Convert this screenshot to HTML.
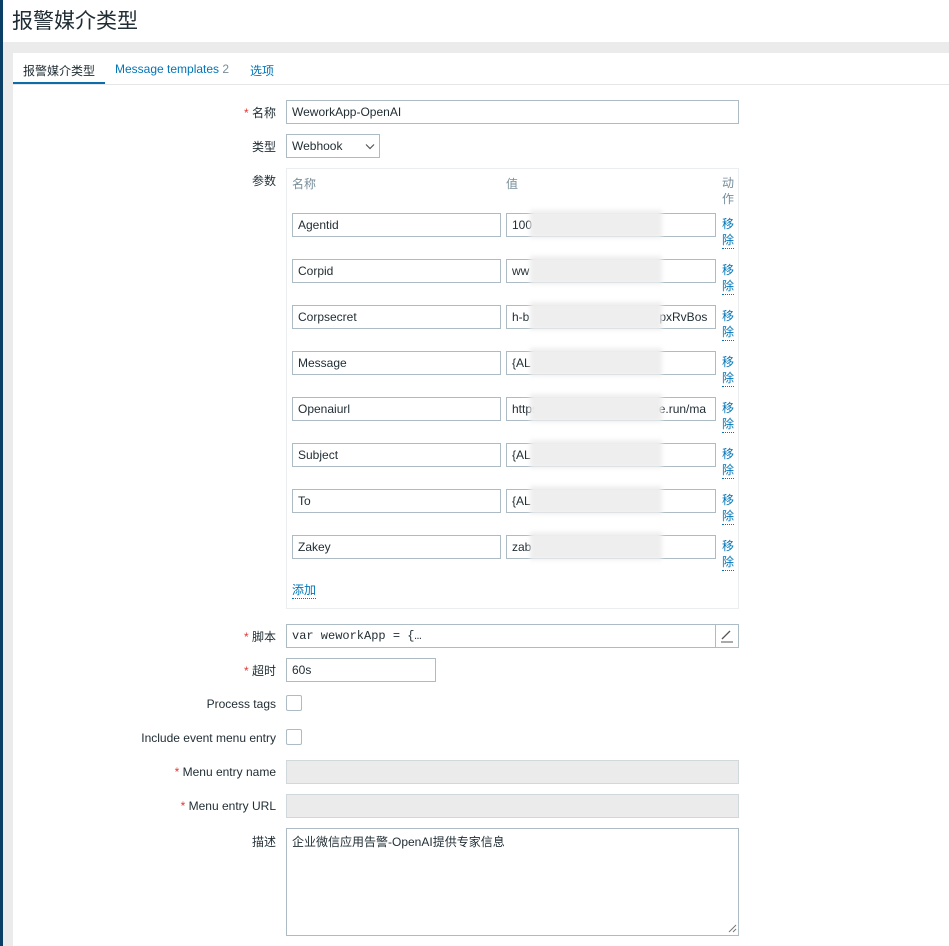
<!DOCTYPE html>
<html><head><meta charset="utf-8">
<style>
*{box-sizing:border-box;margin:0;padding:0}
body{width:949px;height:946px;overflow:hidden;background:#ebebeb;font-family:"Liberation Sans","Noto Sans CJK SC",sans-serif;font-size:12px;color:#1f2c33;position:relative}
.a{position:absolute}
.strip{left:0;top:0;width:3px;height:946px;background:#0c3f66}
.head{left:3px;top:0;width:946px;height:42px;background:#fff}
.title{left:12px;top:5px;font-size:21px;color:#1f2c33}
.panel{left:13px;top:53px;width:936px;height:893px;background:#fff}
.tab{top:62px;font-size:12px}
.inp{border:1px solid #acbbc4;background:#fff;height:24px;padding-left:5px;line-height:22px;font-size:12px;color:#1f2c33;overflow:hidden;white-space:nowrap}
.lbl{right:673px;font-size:12px;text-align:right;white-space:nowrap;color:#1f2c33}
.req{color:#e33734}
.rm{left:722px;color:#0275b8;font-size:12px;line-height:16px}
.rm span{display:block;border-bottom:1px dotted #0275b8;width:12px}
.blur{background:#eee;filter:blur(2px)}
.cb{width:16px;height:16px;border:1px solid #acbbc4;border-radius:2px;background:#fff}
.dis{background:#ebebeb;border:1px solid #d1d8dc}
</style></head><body>
<div class="a strip"></div>
<div class="a head"></div>
<div class="a title">报警媒介类型</div>
<div class="a panel"></div>
<div class="a tab" style="left:23px">报警媒介类型</div>
<div class="a" style="left:13px;top:82px;width:92px;height:3px;background:#0b6ea8"></div>
<div class="a" style="left:13px;top:84px;width:936px;height:1px;background:#e6e6e6"></div>
<div class="a tab" style="left:115px;color:#0275b8">Message templates <span style="color:#768d99">2</span></div>
<div class="a tab" style="left:250px;color:#0275b8">选项</div>

<div class="a lbl" style="top:104px"><span class="req">* </span>名称</div>
<div class="a inp" style="left:286px;top:100px;width:453px">WeworkApp-OpenAI</div>
<div class="a lbl" style="top:138px">类型</div>
<div class="a inp" style="left:286px;top:134px;width:94px">Webhook<svg class="a" style="left:78px;top:8px" width="10" height="7"><path d="M1 1.5l4 4 4-4" stroke="#555" fill="none" stroke-width="1.2"/></svg></div>
<div class="a lbl" style="top:172px">参数</div>
<div class="a" style="left:286px;top:168px;width:453px;height:441px;border:1px solid #ebeef0"></div>
<div class="a" style="left:292px;top:175px;color:#768d99">名称</div>
<div class="a" style="left:506px;top:175px;color:#768d99">值</div>
<div class="a" style="left:722px;top:175px;color:#768d99;line-height:16px">动<br>作</div>

<div class="a inp" style="left:292px;top:213px;width:209px">Agentid</div>
<div class="a inp" style="left:506px;top:213px;width:210px">100</div>
<div class="a blur" style="left:530px;top:210px;width:132px;height:28px"></div>
<div class="a rm" style="top:216px">移<span>除</span></div>

<div class="a inp" style="left:292px;top:259px;width:209px">Corpid</div>
<div class="a inp" style="left:506px;top:259px;width:210px">ww</div>
<div class="a blur" style="left:530px;top:256px;width:132px;height:28px"></div>
<div class="a rm" style="top:262px">移<span>除</span></div>

<div class="a inp" style="left:292px;top:305px;width:209px">Corpsecret</div>
<div class="a inp" style="left:506px;top:305px;width:210px">h-b<span style="margin-left:130px">pxRvBos</span></div>
<div class="a blur" style="left:530px;top:302px;width:132px;height:28px"></div>
<div class="a rm" style="top:308px">移<span>除</span></div>

<div class="a inp" style="left:292px;top:351px;width:209px">Message</div>
<div class="a inp" style="left:506px;top:351px;width:210px">{AL</div>
<div class="a blur" style="left:530px;top:348px;width:132px;height:28px"></div>
<div class="a rm" style="top:354px">移<span>除</span></div>

<div class="a inp" style="left:292px;top:397px;width:209px">Openaiurl</div>
<div class="a inp" style="left:506px;top:397px;width:210px">https<span style="margin-left:114px">de.run/ma</span></div>
<div class="a blur" style="left:530px;top:394px;width:132px;height:28px"></div>
<div class="a rm" style="top:400px">移<span>除</span></div>

<div class="a inp" style="left:292px;top:443px;width:209px">Subject</div>
<div class="a inp" style="left:506px;top:443px;width:210px">{AL</div>
<div class="a blur" style="left:530px;top:440px;width:132px;height:28px"></div>
<div class="a rm" style="top:446px">移<span>除</span></div>

<div class="a inp" style="left:292px;top:489px;width:209px">To</div>
<div class="a inp" style="left:506px;top:489px;width:210px">{AL</div>
<div class="a blur" style="left:530px;top:486px;width:132px;height:28px"></div>
<div class="a rm" style="top:492px">移<span>除</span></div>

<div class="a inp" style="left:292px;top:535px;width:209px">Zakey</div>
<div class="a inp" style="left:506px;top:535px;width:210px">zab</div>
<div class="a blur" style="left:530px;top:532px;width:132px;height:28px"></div>
<div class="a rm" style="top:538px">移<span>除</span></div>

<div class="a rm" style="left:292px;top:582px"><span style="width:24px">添加</span></div>

<div class="a lbl" style="top:628px"><span class="req">* </span>脚本</div>
<div class="a inp" style="left:286px;top:624px;width:453px;font-family:'Liberation Mono',monospace;font-size:12px">var weworkApp = {…</div>
<div class="a" style="left:715px;top:625px;width:1px;height:22px;background:#acbbc4"></div>
<svg class="a" style="left:719px;top:628px" width="16" height="16"><path d="M3 11L11 3" stroke="#555" stroke-width="1.3"/><path d="M2 14h12" stroke="#555" stroke-width="1"/></svg>

<div class="a lbl" style="top:662px"><span class="req">* </span>超时</div>
<div class="a inp" style="left:286px;top:658px;width:150px">60s</div>
<div class="a lbl" style="top:697px">Process tags</div>
<div class="a cb" style="left:286px;top:695px"></div>
<div class="a lbl" style="top:731px">Include event menu entry</div>
<div class="a cb" style="left:286px;top:729px"></div>
<div class="a lbl" style="top:765px"><span class="req">* </span>Menu entry name</div>
<div class="a inp dis" style="left:286px;top:760px;width:453px"></div>
<div class="a lbl" style="top:799px"><span class="req">* </span>Menu entry URL</div>
<div class="a inp dis" style="left:286px;top:794px;width:453px"></div>
<div class="a lbl" style="top:833px">描述</div>
<div class="a inp" style="left:286px;top:828px;width:453px;height:108px;line-height:16px;padding-top:5px">企业微信应用告警-OpenAI提供专家信息</div>
<svg class="a" style="left:728px;top:924px" width="9" height="9"><path d="M8 1L1 8M8 5L5 8" stroke="#777" stroke-width="1"/></svg>
</body></html>
